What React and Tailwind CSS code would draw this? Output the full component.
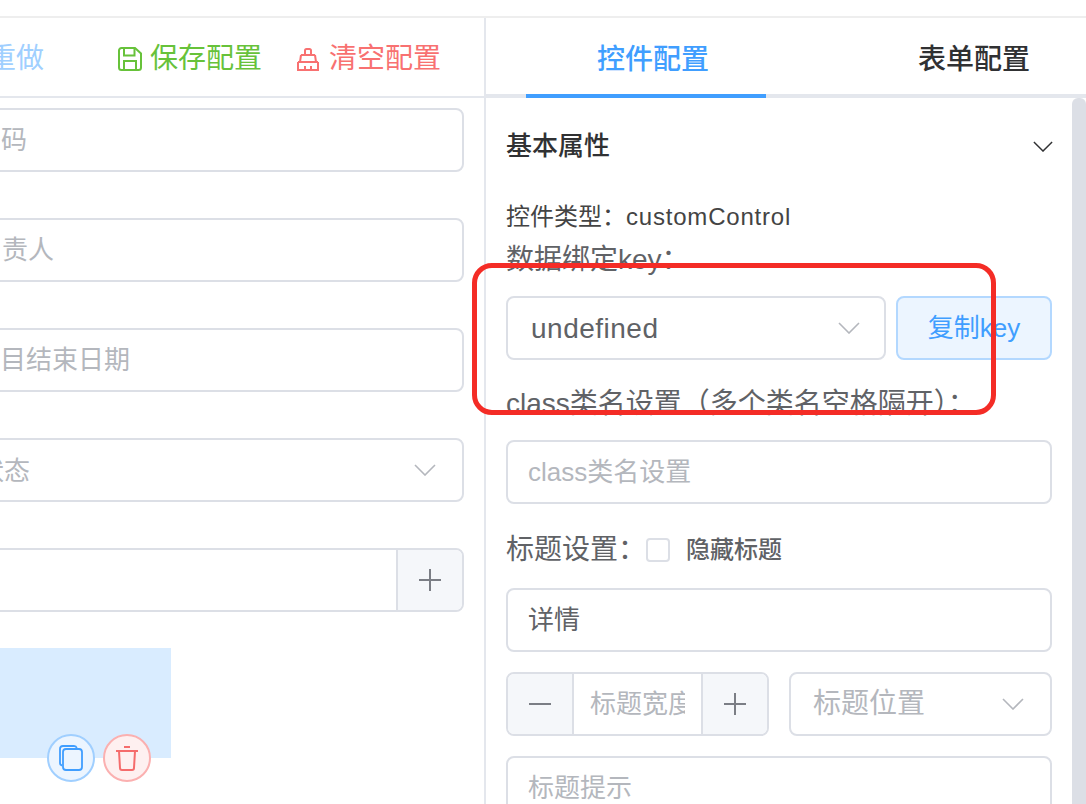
const font = { fontFamily: '"Liberation Sans", "Noto Sans CJK SC", sans-serif' };

const Chevron = ({ className }) => (
  <svg className={className} viewBox="0 0 22 12" fill="none" stroke="currentColor" strokeWidth="1.6">
    <path d="M1 1l10 10L21 1" />
  </svg>
);

const Plus = () => (
  <svg className="w-[22px] h-[22px] text-[#7b7e85]" viewBox="0 0 22 22" fill="none" stroke="currentColor" strokeWidth="2">
    <path d="M0 11h22M11 0v22" />
  </svg>
);

const SaveIcon = () => (
  <svg className="w-6 h-6 text-[#67c23a]" viewBox="0 0 24 24" fill="none" stroke="currentColor" strokeWidth="2">
    <path d="M3.500 1h13.500l6 5.500v14a2.500 2.500 0 0 1-2.500 2.500h-17A2.500 2.500 0 0 1 1 20.500v-17A2.500 2.500 0 0 1 3.500 1z" />
    <path d="M6 2v6.500h10.500V2M6 23v-9h12v9" />
  </svg>
);

const BrushIcon = () => (
  <svg className="w-[22px] h-[23px] text-[#f87171]" viewBox="0 0 22 23" fill="none" stroke="currentColor" strokeWidth="2">
    <path d="M8 7V2.500A1.500 1.500 0 0 1 9.500 1h3A1.500 1.500 0 0 1 14 2.500V7" />
    <path d="M4 7h14M4 7l-1 7M18 7l1 7M1 14h20M1 14v8h20v-8M8 22v-4M14 22v-4" />
  </svg>
);

const CopyIcon = () => (
  <svg className="w-[24px] h-[26px] text-[#409eff]" viewBox="0 0 24 26" fill="none" stroke="currentColor" strokeWidth="1.800">
    <path d="M3 20.500a2.500 2.500 0 0 1-2-2.500V4a3 3 0 0 1 3-3h11a3 3 0 0 1 2.800 2" />
    <rect x="4" y="4" width="19" height="21" rx="3" />
  </svg>
);

const TrashIcon = () => (
  <svg className="w-[24px] h-[25px] text-[#f56c6c]" viewBox="0 0 24 25" fill="none" stroke="currentColor" strokeWidth="2">
    <path d="M9 1h6M1 5h22M4 5l1 17a2 2 0 0 0 2 2h10a2 2 0 0 0 2-2l1-17" />
  </svg>
);

const boxClass = 'h-16 border-2 border-[#dcdfe6] rounded-lg bg-white flex items-center overflow-hidden shrink-0';

export default function App() {
  return (
    <div className="w-[1086px] h-[804px] overflow-hidden bg-white flex flex-col" style={font}>
      <div className="h-[18px] shrink-0 border-b-2 border-[#eeeeee]" />

      <div className="flex flex-1 min-h-0">
        {/* left: canvas */}
        <div className="w-[486px] shrink-0 border-r-2 border-[#e4e7ed] overflow-hidden flex flex-col">
          <div className="h-[80px] shrink-0 border-b-2 border-[#e4e7ed] flex items-center text-[28px] leading-none pt-[4px]">
            <span className="text-[#a0cfff] -ml-[12px] whitespace-nowrap">重做</span>
            <span className="ml-[74px] mr-[8px]"><SaveIcon /></span>
            <span className="text-[#67c23a] whitespace-nowrap">保存配置</span>
            <span className="ml-[35px] mr-[10px]"><BrushIcon /></span>
            <span className="text-[#f87171] whitespace-nowrap">清空配置</span>
          </div>

          <div className="flex flex-col gap-[46px] pt-[10px] -ml-[20px] w-[484px]">
            <div className={boxClass}>
              <span className="ml-[-7px] text-[26px] text-[#b4b7bd] whitespace-nowrap">编码</span>
            </div>
            <div className={boxClass}>
              <span className="ml-[20px] text-[26px] text-[#b4b7bd] whitespace-nowrap">责人</span>
            </div>
            <div className={boxClass}>
              <span className="ml-[18px] text-[26px] text-[#b4b7bd] whitespace-nowrap">目结束日期</span>
            </div>
            <div className={boxClass + ' justify-between pr-[26px]'}>
              <span className="ml-[-4px] pt-[2px] text-[26px] text-[#b4b7bd] whitespace-nowrap">状态</span>
              <Chevron className="w-[22px] h-3 text-[#b4b7bd]" />
            </div>
            <div className={boxClass + ' justify-end'}>
              <div className="w-[66px] h-full border-l-2 border-[#dcdfe6] bg-[#f5f7fa] flex items-center justify-center">
                <Plus />
              </div>
            </div>
          </div>

          <div className="relative w-[171px] h-[110px] bg-[#d9ecff] mt-[36px] shrink-0">
            <div className="absolute left-[47px] top-[86px] w-12 h-12 rounded-full border-2 border-[#a0cfff] bg-[#ecf5ff] flex items-center justify-center">
              <CopyIcon />
            </div>
            <div className="absolute left-[103px] top-[86px] w-12 h-12 rounded-full border-2 border-[#fbb0b0] bg-[#fef0f0] flex items-center justify-center">
              <TrashIcon />
            </div>
          </div>
        </div>

        {/* right: config panel */}
        <div className="flex-1 min-w-0 flex flex-col">
          <div className="h-[80px] shrink-0 border-b-4 border-[#e4e7ed] flex relative text-[28px] font-medium">
            <div className="ml-[40px] w-[240px] h-[80px] border-b-4 border-[#409eff] text-[#409eff] flex items-center justify-center pl-[14px] pt-[8px] shrink-0">
              控件配置
            </div>
            <div className="ml-[152px] h-[76px] text-[#303133] flex items-center whitespace-nowrap pt-[8px]">表单配置</div>
          </div>

          <div className="flex flex-1 min-h-0 overflow-hidden">
            <div className="w-[566px] shrink-0 pl-[20px] flex flex-col">
              <div className="w-[546px] h-[60px] mt-[18px] flex items-center justify-between text-[#303133] shrink-0">
                <span className="text-[26px] font-medium">基本属性</span>
                <Chevron className="w-[20px] h-[11px] mr-[-1px]" />
              </div>
              <div className="mt-[23px] h-[36px] flex items-center text-[24px] text-[#444] shrink-0 whitespace-nowrap">
                控件类型：<span className="tracking-[0.8px]">customControl</span>
              </div>
              <div className="mt-[5px] h-[40px] flex items-center text-[28px] text-[#606266] shrink-0 whitespace-nowrap">
                数据绑定key：
              </div>
              <div className="mt-[16px] flex gap-[10px] shrink-0">
                <div className={boxClass + ' w-[380px] justify-between pl-[23px] pr-[24px]'}>
                  <span className="text-[28px] pt-[2px] tracking-[0.5px] text-[#606266]">undefined</span>
                  <Chevron className="w-[22px] h-3 text-[#b4b7bd]" />
                </div>
                <div className="w-[156px] h-16 border-2 border-[#b3d8ff] rounded-lg bg-[#ecf5ff] text-[#409eff] text-[26px] flex items-center justify-center">
                  复制key
                </div>
              </div>
              <div className="mt-[24px] h-[40px] flex items-center text-[28px] text-[#606266] shrink-0 whitespace-nowrap">
                class类名设置（多个类名空格隔开）：
              </div>
              <div className={boxClass + ' mt-[16px] px-[20px] w-[546px]'}>
                <span className="text-[26px] text-[#b4b7bd]">class类名设置</span>
              </div>
              <div className="mt-[26px] h-[40px] flex items-center shrink-0 whitespace-nowrap">
                <span className="text-[28px] text-[#606266]">标题设置：</span>
                <span className="w-6 h-6 border-2 border-[#dcdfe6] rounded-[4px] bg-white shrink-0" />
                <span className="ml-[16px] text-[24px] font-medium text-[#606266]">隐藏标题</span>
              </div>
              <div className={boxClass + ' mt-[18px] px-[20px] w-[546px]'}>
                <span className="text-[26px] text-[#606266]">详情</span>
              </div>
              <div className="mt-[20px] flex gap-[20px] w-[546px] shrink-0">
                <div className={boxClass + ' w-[263px]'}>
                  <div className="w-[66px] h-full border-r-2 border-[#dcdfe6] bg-[#f5f7fa] flex items-center justify-center shrink-0">
                    <div className="w-[22px] h-[2px] bg-[#7b7e85]" />
                  </div>
                  <div className="flex-1 min-w-0 pl-[16px] pr-[16px] overflow-hidden">
                    <div className="text-[26px] text-[#b4b7bd] whitespace-nowrap overflow-hidden">标题宽度</div>
                  </div>
                  <div className="w-[66px] h-full border-l-2 border-[#dcdfe6] bg-[#f5f7fa] flex items-center justify-center shrink-0">
                    <Plus />
                  </div>
                </div>
                <div className={boxClass + ' flex-1 justify-between pl-[22px] pr-[26px]'}>
                  <span className="text-[28px] text-[#b4b7bd]">标题位置</span>
                  <Chevron className="w-[22px] h-3 text-[#b4b7bd]" />
                </div>
              </div>
              <div className={boxClass + ' mt-[20px] px-[20px] w-[546px]'}>
                <span className="text-[26px] text-[#b4b7bd]">标题提示</span>
              </div>
            </div>
            <div className="w-[14px] ml-auto bg-[#dcdfe6] rounded-t-md shrink-0" />
          </div>
        </div>
      </div>

      {/* red annotation drawn over the screenshot */}
      <div className="absolute left-[472px] top-[263px] w-[524px] h-[152px] border-[5px] border-[#f42c26] rounded-[20px] pointer-events-none" />
    </div>
  );
}
